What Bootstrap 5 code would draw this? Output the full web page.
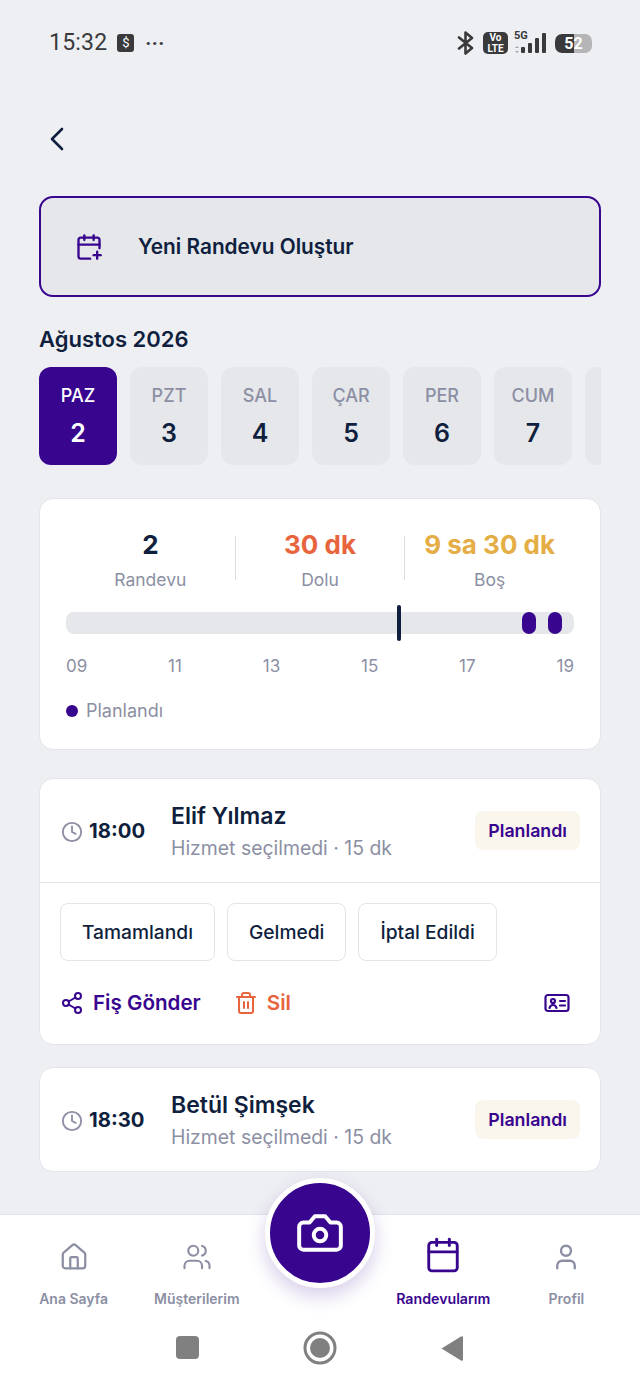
<!DOCTYPE html>
<html lang="tr">
<head>
  <meta charset="UTF-8">
  <meta name="viewport" content="width=device-width, initial-scale=1">
  <title>Randevularım</title>
  <link href="https://cdn.jsdelivr.net/npm/bootstrap@5.3.3/dist/css/bootstrap.min.css" rel="stylesheet">
  <style>
    html, body { height: 100%; }
    body { background: #eeeff3; color: #0f1f3d; font-family: Inter, "Liberation Sans", sans-serif; overflow: hidden; }
    .screen { height: 1386px; }
    svg { display: block; flex-shrink: 0; }

    .status-bar { height: 84px; padding: 31px 48px 0 49px; color: #3a3a3c; font-family: Roboto, "Liberation Sans", sans-serif; }
    .status-time { font-size: 23px; line-height: 24px; letter-spacing: .2px; }
    .status-app { width: 17px; height: 18px; margin-left: 10px; border-radius: 3px; background: #3a3a3c; color: #fff; font-size: 13px; line-height: 18px; text-align: center; }
    .status-dots { margin-left: 11px; font-size: 20px; line-height: 18px; letter-spacing: .5px; font-weight: 700; }
    .status-volte { width: 25px; height: 22px; margin-left: 8px; border-radius: 5px; background: #3a3a3c; color: #fff; font-size: 10px; line-height: 11px; font-weight: 700; text-align: center; }
    .status-net { margin-left: 6px; position: relative; width: 33px; height: 22px; }
    .status-5g { position: absolute; left: 0; top: -2px; font-size: 11px; line-height: 11px; font-weight: 700; }
    .status-batt { width: 37px; height: 19px; margin-left: 8px; border-radius: 7px; background: linear-gradient(90deg, #3a3a3c 50%, #b5b5b7 50%); color: #fff; font-size: 16px; line-height: 19px; font-weight: 700; text-align: center; }

    .back-row { height: 112px; padding-top: 42px; padding-left: 47px; }
    .page-body { padding: 0 39px; }

    .new-appt { height: 101px; padding: 0 34px; gap: 35px; background: #e5e7eb; border: 2px solid #38058f; border-radius: 14px; font-size: 20.8px; font-weight: 600; color: #0f1f3d; }
    .new-appt span { padding-top: 1px; }
    .month-title { margin: 27px 0 13px; font-size: 22px; line-height: 30px; font-weight: 600; }

    .day-strip { gap: 13px; overflow: hidden; }
    .day-tile { flex: 0 0 78px; height: 98px; padding-top: 18px; border-radius: 12px; background: #e5e7eb; text-align: center; }
    .day-tile.is-active { background: #38058f; color: #fff; }
    .day-name { font-size: 18px; line-height: 22px; color: #8c8fa3; font-weight: 500; }
    .is-active .day-name { color: #fff; }
    .day-num { margin-top: 12px; font-size: 25px; line-height: 28px; font-weight: 600; }

    .panel { background: #fff; border: 1px solid #e2e4ea; border-radius: 14px; }
    .summary { height: 252px; margin-top: 33px; padding: 37px 26px 0; }
    .stat-col { flex: 1 1 0; text-align: center; height: 44px; }
    .stat-col + .stat-col { border-left: 1px solid #dcdee4; }
    .stat-value { margin-top: -6px; font-size: 26px; line-height: 30px; font-weight: 700; }
    .stat-label { margin-top: 10px; font-size: 17.5px; line-height: 20px; color: #8c8fa3; }
    .tone-orange { color: #e8643c; }
    .tone-yellow { color: #e5ad45; }

    .time-track { height: 22px; margin-top: 32px; border-radius: 8px; background: #e5e7eb; position: relative; }
    .track-slot { position: absolute; top: 0; width: 14px; height: 22px; border-radius: 7px; background: #38058f; }
    .track-now { position: absolute; top: -7px; width: 4px; height: 36px; border-radius: 2px; background: #0f1f3d; }
    .tick-row { margin-top: 22px; font-size: 17px; line-height: 20px; color: #8c8fa3; }
    .legend-row { margin-top: 25px; gap: 8px; font-size: 18px; line-height: 20px; color: #8c8fa3; }
    .legend-dot { width: 12px; height: 12px; border-radius: 50%; background: #38058f; }

    .appt-head { height: 103px; padding: 0 20px 0 21px; }
    .appt-time { width: 110px; gap: 6px; padding-top: 2px; font-size: 20.3px; font-weight: 700; color: #0f1f3d; }
    .appt-info { padding-top: 1px; }
    .appt-name { font-size: 23px; line-height: 28px; font-weight: 600; }
    .appt-sub { margin-top: 6px; font-size: 19.4px; line-height: 24px; color: #8c8fa3; }
    .status-chip { padding: 0 13px; height: 39px; line-height: 39px; border-radius: 8px; background: #faf6ed; color: #38058f; font-size: 17.8px; font-weight: 600; }
    .appt-first { margin-top: 28px; height: 267px; }
    .appt-second { margin-top: 22px; height: 105px; }
    .appt-actions { border-top: 1px solid #e2e4ea; padding: 20px 20px 0; }
    .btn-state { height: 58px; padding: 0 21px; border: 1px solid #e2e4ea; border-radius: 8px; background: #fff; color: #0f1f3d; font-size: 19.2px; font-weight: 500; line-height: 56px; }
    .link-row { margin-top: 27px; height: 30px; font-size: 20.6px; font-weight: 600; }
    .link-purple { color: #38058f; gap: 9px; text-decoration: none; }
    .link-orange { color: #e8643c; gap: 9px; text-decoration: none; margin-left: 33px; }
    .card-icon { margin-left: auto; margin-right: 10px; }

    .tabbar { height: 172px; background: #fff; border-top: 1px solid #e2e4ea; position: relative; }
    .tab-row { height: 105px; padding: 0 12px; }
    .tab-item { flex: 1 1 0; padding-top: 27px; text-align: center; font-size: 14px; line-height: 18px; font-weight: 600; color: #8c8fa3; text-decoration: none; }
    .tab-item svg { margin: 0 auto 18px; }
    .tab-item.is-current { color: #38058f; padding-top: 21px; font-size: 14.2px; }
    .tab-item.is-current svg { margin-bottom: 16px; }
    .fab { position: absolute; left: 265px; top: -37px; width: 110px; height: 110px; padding: 0; border: 5px solid #fff; border-radius: 50%; background: #38058f; box-shadow: 0 8px 20px rgba(56, 5, 143, .2); }
    .system-nav { height: 66px; }
    .sys-square { width: 23px; height: 23px; border-radius: 4px; background: #808080; }
  </style>
</head>
<body>
<div class="screen d-flex flex-column">

  <!-- status bar -->
  <div class="status-bar d-flex justify-content-between align-items-start">
    <div class="d-flex align-items-center">
      <span class="status-time">15:32</span>
      <span class="status-app">$</span>
      <span class="status-dots">···</span>
    </div>
    <div class="d-flex align-items-center">
      <svg width="18" height="24" viewBox="0 0 18 24" fill="none" stroke="#3a3a3c" stroke-width="2.6" stroke-linejoin="round" stroke-linecap="round"><path d="M2 6.5 15 17l-6.5 5.5v-21L15 7 2 17.500"/></svg>
      <div class="status-volte">Vo<br>LTE</div>
      <div class="status-net">
        <span class="status-5g">5G</span>
        <svg width="33" height="22" viewBox="0 0 33 22" class="position-absolute top-0 start-0"><path d="M3 14l2 2H1zM3 21l2-2H1z" fill="#a8a8aa"/><rect x="7" y="15" width="4" height="6" rx="1" fill="#3a3a3c"/><rect x="14" y="11" width="4" height="10" rx="1" fill="#3a3a3c"/><rect x="21" y="6" width="4" height="15" rx="1" fill="#3a3a3c"/><rect x="28" y="1" width="4" height="20" rx="1" fill="#3a3a3c"/></svg>
      </div>
      <div class="status-batt">52</div>
    </div>
  </div>

  <!-- back -->
  <div class="back-row">
    <a href="#" class="d-block" aria-label="Geri">
      <svg width="20" height="26" viewBox="0 0 20 26" fill="none" stroke="#0f1f3d" stroke-width="2.6" stroke-linecap="round" stroke-linejoin="round"><path d="M15 3 5 13l10 10"/></svg>
    </a>
  </div>

  <div class="page-body flex-grow-1">
    <div class="new-appt d-flex align-items-center">
      <svg width="28" height="28" viewBox="0 0 24 24" fill="none" stroke="#38058f" stroke-width="2" stroke-linecap="round" stroke-linejoin="round"><path d="M8 2v4"/><path d="M16 2v4"/><path d="M21 13V6a2 2 0 0 0-2-2H5a2 2 0 0 0-2 2v14a2 2 0 0 0 2 2h8"/><path d="M3 10h18"/><path d="M16 19h6"/><path d="M19 16v6"/></svg>
      <span>Yeni Randevu Oluştur</span>
    </div>

    <div class="month-title">Ağustos 2026</div>
    <div class="day-strip d-flex" id="dayStrip"></div>

    <!-- day summary -->
    <div class="panel summary">
      <div class="d-flex">
        <div class="stat-col"><div class="stat-value">2</div><div class="stat-label">Randevu</div></div>
        <div class="stat-col"><div class="stat-value tone-orange">30 dk</div><div class="stat-label">Dolu</div></div>
        <div class="stat-col"><div class="stat-value tone-yellow">9 sa 30 dk</div><div class="stat-label">Boş</div></div>
      </div>
      <div class="time-track">
        <span class="track-now" style="left: 65.2%"></span>
        <span class="track-slot" style="left: 89.8%"></span>
        <span class="track-slot" style="left: 94.9%"></span>
      </div>
      <div class="tick-row d-flex justify-content-between">
        <span>09</span><span>11</span><span>13</span><span>15</span><span>17</span><span>19</span>
      </div>
      <div class="legend-row d-flex align-items-center"><span class="legend-dot"></span><span>Planlandı</span></div>
    </div>

    <!-- appointment 1 -->
    <div class="panel appt-first">
      <div class="appt-head d-flex align-items-center">
        <div class="appt-time d-flex align-items-center">
          <svg width="22" height="22" viewBox="0 0 24 24" fill="none" stroke="#8c8fa3" stroke-width="2" stroke-linecap="round" stroke-linejoin="round"><circle cx="12" cy="12" r="10"/><path d="M12 6v6l4 2"/></svg>
          <span>18:00</span>
        </div>
        <div class="appt-info flex-grow-1">
          <div class="appt-name">Elif Yılmaz</div>
          <div class="appt-sub">Hizmet seçilmedi · 15 dk</div>
        </div>
        <span class="status-chip">Planlandı</span>
      </div>
      <div class="appt-actions">
        <div class="d-flex gap-2">
          <button class="btn btn-state me-1">Tamamlandı</button>
          <button class="btn btn-state me-1">Gelmedi</button>
          <button class="btn btn-state">İptal Edildi</button>
        </div>
        <div class="link-row d-flex align-items-center">
          <a href="#" class="link-purple d-flex align-items-center">
            <svg width="24" height="24" viewBox="0 0 24 24" fill="none" stroke="#38058f" stroke-width="2" stroke-linecap="round" stroke-linejoin="round"><circle cx="18" cy="5" r="3"/><circle cx="6" cy="12" r="3"/><circle cx="18" cy="19" r="3"/><path d="m8.590 13.510 6.830 3.980"/><path d="m15.410 6.510-6.820 3.980"/></svg>
            <span>Fiş Gönder</span>
          </a>
          <a href="#" class="link-orange d-flex align-items-center">
            <svg width="24" height="24" viewBox="0 0 24 24" fill="none" stroke="#e8643c" stroke-width="2" stroke-linecap="round" stroke-linejoin="round"><path d="M3 6h18"/><path d="M19 6v14a2 2 0 0 1-2 2H7a2 2 0 0 1-2-2V6"/><path d="M8 6V4a2 2 0 0 1 2-2h4a2 2 0 0 1 2 2v2"/><path d="M10 11v6"/><path d="M14 11v6"/></svg>
            <span>Sil</span>
          </a>
          <svg class="card-icon" width="26" height="20" viewBox="0 0 26 20" fill="none" stroke="#38058f" stroke-width="2.200" stroke-linecap="round" stroke-linejoin="round"><rect x="1.500" y="2" width="23" height="16" rx="2.500"/><circle cx="9" cy="8" r="2"/><path d="M5.500 15c.5-2 2-3 3.500-3s3 1 3.500 3"/><path d="M16 8h5"/><path d="M16 12.500h5"/></svg>
        </div>
      </div>
    </div>

    <!-- appointment 2 -->
    <div class="panel appt-second">
      <div class="appt-head d-flex align-items-center">
        <div class="appt-time d-flex align-items-center">
          <svg width="22" height="22" viewBox="0 0 24 24" fill="none" stroke="#8c8fa3" stroke-width="2" stroke-linecap="round" stroke-linejoin="round"><circle cx="12" cy="12" r="10"/><path d="M12 6v6l4 2"/></svg>
          <span>18:30</span>
        </div>
        <div class="appt-info flex-grow-1">
          <div class="appt-name">Betül Şimşek</div>
          <div class="appt-sub">Hizmet seçilmedi · 15 dk</div>
        </div>
        <span class="status-chip">Planlandı</span>
      </div>
    </div>
  </div>

  <!-- bottom nav -->
  <div class="tabbar">
    <div class="tab-row d-flex">
      <a href="#" class="tab-item">
        <svg width="30" height="30" viewBox="0 0 24 24" fill="none" stroke="#8c8fa3" stroke-width="1.800" stroke-linecap="round" stroke-linejoin="round"><path d="M15 21v-8a1 1 0 0 0-1-1h-4a1 1 0 0 0-1 1v8"/><path d="M3 10a2 2 0 0 1 .709-1.528l7-5.999a2 2 0 0 1 2.582 0l7 5.999A2 2 0 0 1 21 10v9a2 2 0 0 1-2 2H5a2 2 0 0 1-2-2z"/></svg>
        Ana Sayfa
      </a>
      <a href="#" class="tab-item">
        <svg width="32" height="30" viewBox="0 0 24 24" fill="none" stroke="#8c8fa3" stroke-width="1.700" stroke-linecap="round" stroke-linejoin="round"><path d="M16 21v-2a4 4 0 0 0-4-4H6a4 4 0 0 0-4 4v2"/><circle cx="9" cy="7" r="4"/><path d="M22 21v-2a4 4 0 0 0-3-3.870"/><path d="M16 3.130a4 4 0 0 1 0 7.750"/></svg>
        Müşterilerim
      </a>
      <div class="tab-item"></div>
      <a href="#" class="tab-item is-current">
        <svg width="38" height="38" viewBox="0 0 24 24" fill="none" stroke="#38058f" stroke-width="1.800" stroke-linecap="round" stroke-linejoin="round"><path d="M8 2v4"/><path d="M16 2v4"/><rect x="3" y="4" width="18" height="18" rx="2"/><path d="M3 10h18"/></svg>
        Randevularım
      </a>
      <a href="#" class="tab-item">
        <svg width="30" height="30" viewBox="0 0 24 24" fill="none" stroke="#8c8fa3" stroke-width="1.900" stroke-linecap="round" stroke-linejoin="round"><path d="M19 21v-2a4 4 0 0 0-4-4H9a4 4 0 0 0-4 4v2"/><circle cx="12" cy="7" r="4"/></svg>
        Profil
      </a>
    </div>
    <button class="fab d-flex align-items-center justify-content-center" aria-label="Kamera">
      <svg width="50" height="50" viewBox="0 0 24 24" fill="none" stroke="#fff" stroke-width="1.900" stroke-linecap="round" stroke-linejoin="round"><path d="M14.500 4h-5L7 7H4a2 2 0 0 0-2 2v9a2 2 0 0 0 2 2h16a2 2 0 0 0 2-2V9a2 2 0 0 0-2-2h-3l-2.500-3z"/><circle cx="12" cy="13" r="3"/></svg>
    </button>
    <div class="system-nav position-relative">
      <span class="sys-square position-absolute" style="left:176px;top:16px"></span>
      <svg class="position-absolute" style="left:303px;top:11px" width="34" height="34" viewBox="0 0 34 34"><circle cx="17" cy="17" r="15" fill="none" stroke="#808080" stroke-width="3"/><circle cx="17" cy="17" r="10" fill="#808080"/></svg>
      <svg class="position-absolute" style="left:440px;top:15px" width="24" height="27" viewBox="0 0 24 27"><path d="M1.500 13.500 21 1.500q2-.8 2 1v22q0 1.800-2 1z" fill="#808080"/></svg>
    </div>
  </div>
</div>

<script>
  // last tile is only a sliver at the edge of the strip, so it has no label
  const days = [['PAZ', 2], ['PZT', 3], ['SAL', 4], ['ÇAR', 5], ['PER', 6], ['CUM', 7], ['', '']];
  document.getElementById('dayStrip').innerHTML = days.map((d, i) => `
    <div class="day-tile ${i === 0 ? 'is-active' : ''}">
      <div class="day-name">${d[0]}</div>
      <div class="day-num">${d[1]}</div>
    </div>`).join('');
</script>
<script src="https://cdn.jsdelivr.net/npm/bootstrap@5.3.3/dist/js/bootstrap.bundle.min.js"></script>
</body>
</html>
